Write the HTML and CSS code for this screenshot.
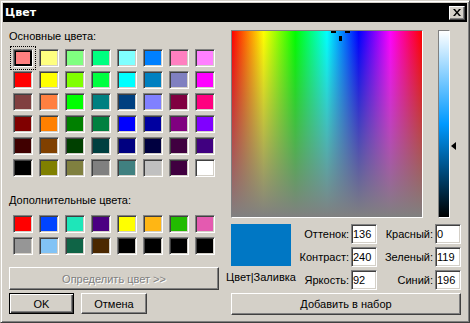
FILE: index.html
```html
<!DOCTYPE html>
<html lang="ru">
<head>
    <meta charset="UTF-8">
    <title>Цвет</title>
    <link rel="stylesheet" href="styles.css">
</head>
<body>
    <div class="window">
        <div class="titlebar">
            <span class="title">Цвет</span>
            <div class="close">
                <svg width="8" height="7" viewBox="0 0 8 7"><path d="M0 0h2l2 2.4L6 0h2L5 3.5 8 7H6L4 4.6 2 7H0l3-3.5z" fill="#000"/></svg>
            </div>
        </div>

        <div class="content">
            <div class="left">
                <div class="label">Основные цвета:</div>
                <div class="swatches">
                    <div class="sw selected" style="background:#ff8080"></div>
                    <div class="sw" style="background:#ffff80"></div>
                    <div class="sw" style="background:#80ff80"></div>
                    <div class="sw" style="background:#00ff80"></div>
                    <div class="sw" style="background:#80ffff"></div>
                    <div class="sw" style="background:#0080ff"></div>
                    <div class="sw" style="background:#ff80c0"></div>
                    <div class="sw" style="background:#ff80ff"></div>

                    <div class="sw" style="background:#ff0000"></div>
                    <div class="sw" style="background:#ffff00"></div>
                    <div class="sw" style="background:#80ff00"></div>
                    <div class="sw" style="background:#00ff40"></div>
                    <div class="sw" style="background:#00ffff"></div>
                    <div class="sw" style="background:#0080c0"></div>
                    <div class="sw" style="background:#8080c0"></div>
                    <div class="sw" style="background:#ff00ff"></div>

                    <div class="sw" style="background:#804040"></div>
                    <div class="sw" style="background:#ff8040"></div>
                    <div class="sw" style="background:#00ff00"></div>
                    <div class="sw" style="background:#008080"></div>
                    <div class="sw" style="background:#004080"></div>
                    <div class="sw" style="background:#8080ff"></div>
                    <div class="sw" style="background:#800040"></div>
                    <div class="sw" style="background:#ff0080"></div>

                    <div class="sw" style="background:#800000"></div>
                    <div class="sw" style="background:#ff8000"></div>
                    <div class="sw" style="background:#008000"></div>
                    <div class="sw" style="background:#008040"></div>
                    <div class="sw" style="background:#0000ff"></div>
                    <div class="sw" style="background:#0000a0"></div>
                    <div class="sw" style="background:#800080"></div>
                    <div class="sw" style="background:#8000ff"></div>

                    <div class="sw" style="background:#400000"></div>
                    <div class="sw" style="background:#804000"></div>
                    <div class="sw" style="background:#004000"></div>
                    <div class="sw" style="background:#004040"></div>
                    <div class="sw" style="background:#000080"></div>
                    <div class="sw" style="background:#000040"></div>
                    <div class="sw" style="background:#400040"></div>
                    <div class="sw" style="background:#400080"></div>

                    <div class="sw" style="background:#000000"></div>
                    <div class="sw" style="background:#808000"></div>
                    <div class="sw" style="background:#808040"></div>
                    <div class="sw" style="background:#808080"></div>
                    <div class="sw" style="background:#408080"></div>
                    <div class="sw" style="background:#c0c0c0"></div>
                    <div class="sw" style="background:#400040"></div>
                    <div class="sw" style="background:#ffffff"></div>
                </div>

                <div class="label custom-label">Дополнительные цвета:</div>
                <div class="swatches">
                    <div class="sw" style="background:#ff0000"></div>
                    <div class="sw" style="background:#0044ff"></div>
                    <div class="sw" style="background:#1ee6b9"></div>
                    <div class="sw" style="background:#4b0082"></div>
                    <div class="sw" style="background:#ffff00"></div>
                    <div class="sw" style="background:#ffb614"></div>
                    <div class="sw" style="background:#22bb00"></div>
                    <div class="sw" style="background:#e45ab0"></div>

                    <div class="sw" style="background:#969696"></div>
                    <div class="sw" style="background:#82c3f5"></div>
                    <div class="sw" style="background:#0f6446"></div>
                    <div class="sw" style="background:#4b2800"></div>
                    <div class="sw" style="background:#000000"></div>
                    <div class="sw" style="background:#000000"></div>
                    <div class="sw" style="background:#000000"></div>
                    <div class="sw" style="background:#000000"></div>
                </div>

                <div class="btn define disabled">Определить цвет &gt;&gt;</div>
                <div class="actions">
                    <div class="btn default ok">OK</div>
                    <div class="btn cancel">Отмена</div>
                </div>
            </div>

            <div class="right">
                <div class="picker-row">
                    <div class="spectrum">
                        <div class="cross cross-left"></div>
                        <div class="cross cross-right"></div>
                        <div class="cross cross-down"></div>
                    </div>
                    <div class="lum"></div>
                    <div class="lum-track">
                        <div class="arrow"></div>
                    </div>
                </div>

                <div class="values">
                    <div class="preview"></div>
                    <div class="caption">Цвет|Заливка</div>

                    <div class="field-label r1 c1">Оттенок:</div>
                    <input class="field r1 c2" type="text" value="136">
                    <div class="field-label r1 c3">Красный:</div>
                    <input class="field r1 c4" type="text" value="0">

                    <div class="field-label r2 c1">Контраст:</div>
                    <input class="field r2 c2" type="text" value="240">
                    <div class="field-label r2 c3">Зеленый:</div>
                    <input class="field r2 c4" type="text" value="119">

                    <div class="field-label r3 c1">Яркость:</div>
                    <input class="field r3 c2" type="text" value="92">
                    <div class="field-label r3 c3">Синий:</div>
                    <input class="field r3 c4" type="text" value="196">
                </div>

                <div class="btn add">Добавить в набор</div>
            </div>
        </div>
    </div>
</body>
</html>
```

FILE: styles.css
```css
body {
    margin: 0;
    background: #d4d0c8;
    font-family: "Liberation Sans", Arial, sans-serif;
    font-size: 11px;
    color: #000;
}

.window {
    width: 470px;
    height: 323px;
    box-sizing: border-box;
    border: 1px solid;
    border-color: #d4d0c8 #404040 #404040 #d4d0c8;
    box-shadow: inset 1px 1px #ffffff, inset -1px -1px #808080;
    padding: 2px;
    background: #d4d0c8;
    display: flex;
    flex-direction: column;
}

/* title bar */
.titlebar {
    height: 19px;
    flex: none;
    background: #000;
    display: flex;
    align-items: center;
    justify-content: space-between;
    padding: 0 2px 0 2px;
}

.title {
    color: #fff;
    font-family: "DejaVu Sans", sans-serif;
    font-weight: bold;
    font-size: 11px;
}

.close {
    width: 16px;
    height: 14px;
    box-sizing: border-box;
    background: #d4d0c8;
    border: 1px solid;
    border-color: #fff #404040 #404040 #fff;
    box-shadow: inset -1px -1px #808080;
    display: flex;
    align-items: center;
    justify-content: center;
}

/* body */
.content {
    flex: 1;
    display: flex;
    gap: 12px;
    padding: 8px 6px 0 6px;
}

.left {
    width: 210px;
    display: flex;
    flex-direction: column;
}

.label {
    height: 13px;
    line-height: 13px;
    white-space: nowrap;
}

.custom-label {
    margin-top: 17px;
}

.swatches {
    display: grid;
    grid-template-columns: repeat(8, 20px);
    grid-auto-rows: 18px;
    column-gap: 6px;
    row-gap: 4px;
    margin: 6px 0 0 4px;
}

.custom-label + .swatches {
    margin-top: 8px;
}

.sw {
    box-sizing: border-box;
    border: 1px solid;
    border-color: #808080 #fff #fff #808080;
    box-shadow: inset 1px 1px #404040, inset -1px -1px #d4d0c8;
}

.sw.selected {
    box-shadow: inset 1px 1px #404040, inset -1px -1px #000, inset 0 0 0 2px #000;
    outline: 1px dotted #000;
    outline-offset: 2px;
}

/* buttons */
.btn {
    box-sizing: border-box;
    background: #d4d0c8;
    border: 1px solid;
    border-color: #fff #404040 #404040 #fff;
    box-shadow: inset -1px -1px #808080;
    display: flex;
    align-items: center;
    justify-content: center;
    white-space: nowrap;
}

.btn.default {
    border-color: #000;
    box-shadow: inset 1px 1px #fff, inset -1px -1px #404040, inset -2px -2px #808080;
}

.btn.disabled {
    color: #808080;
    text-shadow: 1px 1px #fff;
}

.define {
    height: 23px;
    margin-top: 12px;
}

.actions {
    display: flex;
    gap: 7px;
    margin-top: 3px;
}

.ok {
    width: 65px;
    height: 21px;
}

.cancel {
    width: 66px;
    height: 21px;
}

/* right side */
.right {
    width: 230px;
    display: flex;
    flex-direction: column;
}

.picker-row {
    display: flex;
    height: 188px;
}

.spectrum {
    position: relative;
    width: 192px;
    height: 188px;
    box-sizing: border-box;
    border: 1px solid;
    border-color: #808080 #fff #fff #808080;
    background:
        linear-gradient(to bottom, rgba(128, 128, 128, 0), #808080),
        linear-gradient(to right, #ff0000, #ffff00 16.67%, #00ff00 33.33%, #00ffff 50%, #0000ff 66.67%, #ff00ff 83.33%, #ff0000);
}

.cross {
    position: absolute;
    background: #000;
}

.cross-left {
    left: 99px;
    top: 0;
    width: 5px;
    height: 2px;
}

.cross-right {
    left: 113px;
    top: 0;
    width: 5px;
    height: 2px;
}

.cross-down {
    left: 107px;
    top: 5px;
    width: 3px;
    height: 5px;
}

.lum {
    width: 12px;
    height: 188px;
    box-sizing: border-box;
    margin-left: 15px;
    border: 1px solid;
    border-color: #808080 #fff #fff #808080;
    background: linear-gradient(to bottom, #ffffff, #0099ff 50%, #000000);
}

.lum-track {
    position: relative;
    width: 10px;
}

.arrow {
    position: absolute;
    left: 1px;
    top: 112px;
    width: 0;
    height: 0;
    border-style: solid;
    border-width: 4px 5px 4px 0;
    border-color: transparent #000 transparent transparent;
}

.values {
    display: grid;
    grid-template-columns: 60px 56px 26px 54px 26px;
    grid-template-rows: 20px 20px 20px;
    column-gap: 2px;
    row-gap: 3px;
    margin-top: 6px;
}

.preview {
    grid-column: 1;
    grid-row: 1 / 3;
    height: 42px;
    background: #0077c4;
}

.caption {
    grid-column: 1;
    grid-row: 3;
    margin-top: 1px;
    display: flex;
    justify-content: center;
    white-space: nowrap;
    line-height: 13px;
}

.r1 { grid-row: 1; }
.r2 { grid-row: 2; }
.r3 { grid-row: 3; }
.c1 { grid-column: 2; }
.c2 { grid-column: 3; }
.c3 { grid-column: 4; }
.c4 { grid-column: 5; }

.field-label {
    display: flex;
    align-items: center;
    justify-content: flex-end;
    white-space: nowrap;
}

.field {
    width: 26px;
    height: 20px;
    box-sizing: border-box;
    margin: 0;
    padding: 0 0 0 1px;
    font-family: "Liberation Sans", Arial, sans-serif;
    font-size: 11px;
    color: #000;
    background: #fff;
    border: 1px solid;
    border-color: #808080 #fff #fff #808080;
    box-shadow: inset 1px 1px #404040, inset -1px -1px #d4d0c8;
    outline: none;
}

.add {
    height: 22px;
    margin-top: 3px;
}
```
